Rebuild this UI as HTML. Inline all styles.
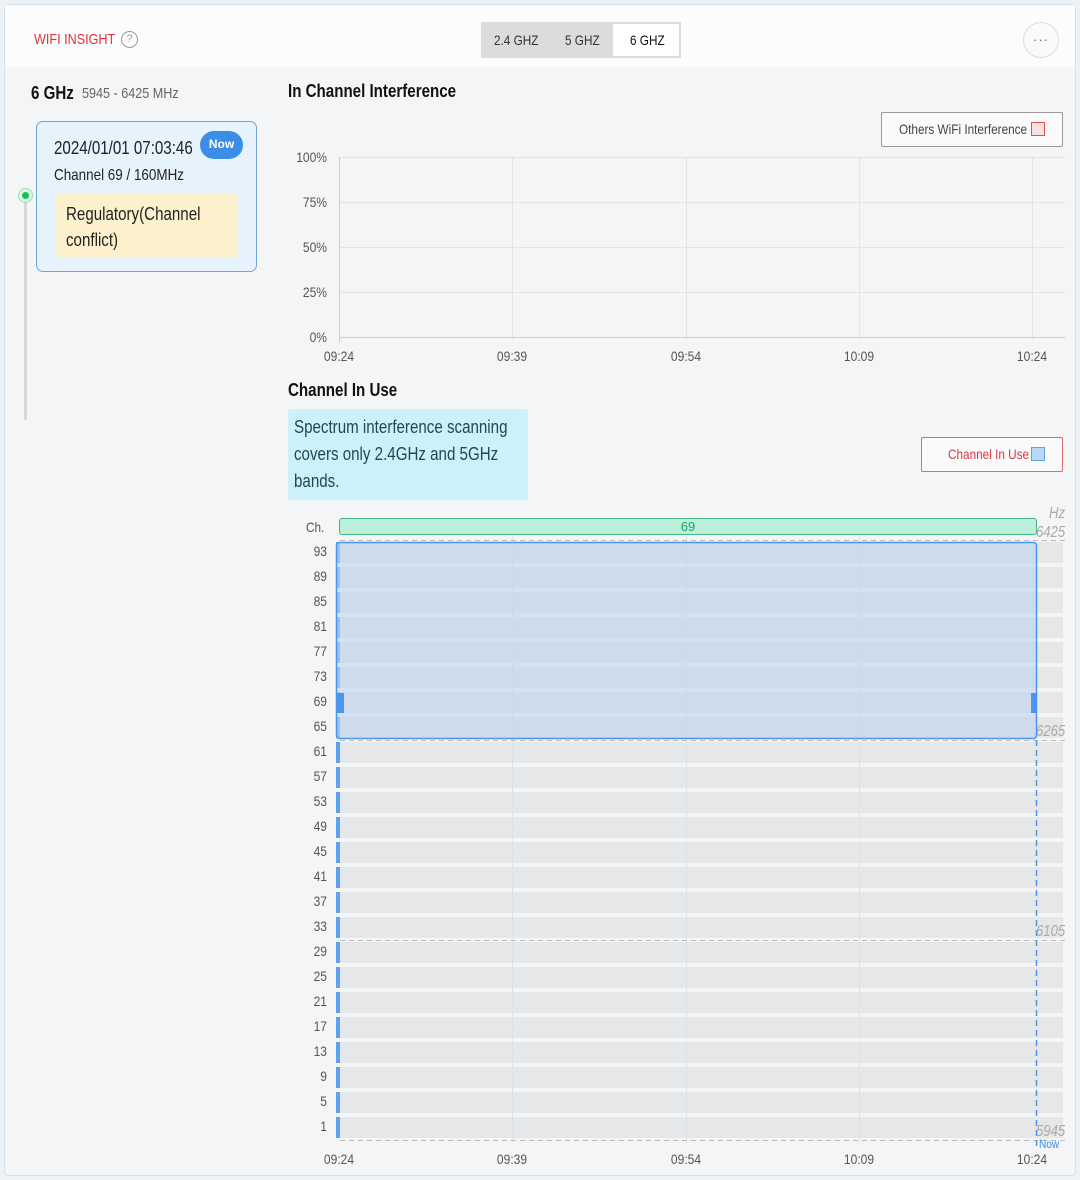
<!DOCTYPE html>
<html><head><meta charset="utf-8">
<style>
*{margin:0;padding:0;box-sizing:border-box}
body{width:1080px;height:1180px;background:#eef2f5;font-family:"Liberation Sans",sans-serif;color:#222;position:relative;overflow:hidden}
.a{position:absolute;white-space:nowrap}
.n{transform:scaleX(.84);transform-origin:0 0}
.card{left:4px;top:4px;width:1072px;height:1172px;background:#f4f5f6;border:1px solid #cfe3f0;border-radius:4px}
.hdr{left:5px;top:5px;width:1070px;height:62px;background:#fbfcfc}
.yl{font-size:14px;color:#555;text-align:right;width:40px;transform:scaleX(.86);transform-origin:100% 0}
.xl{font-size:14px;color:#555;width:50px;text-align:center;transform:scaleX(.86)}
.row{left:340px;width:723px;height:21px;background:#e6e7e8}
.tick{left:336px;width:4px;height:21px;background:#5aa2f2}
.cl{left:296px;width:31px;text-align:right;font-size:14px;color:#555;transform:scaleX(.86);transform-origin:100% 0}
.hz{font-size:16px;color:#aaa;font-style:italic;transform:scaleX(.82);transform-origin:0 0}
</style></head><body>
<div class="a card"></div>
<div class="a hdr"></div>
<div class="a n" style="left:34px;top:31px;font-size:15px;color:#e0303a">WIFI INSIGHT</div>
<div class="a" style="left:121px;top:31px;width:17px;height:17px;border:1.5px solid #999;border-radius:50%;font-size:11px;color:#999;text-align:center;line-height:14px">?</div>
<div class="a" style="left:481px;top:22px;width:200px;height:36px;background:#dcdcdc;border:1px solid #ddd"></div>
<div class="a" style="left:613px;top:24px;width:66px;height:32px;background:#fff"></div>
<div class="a n" style="left:494px;top:32px;font-size:14px;color:#333">2.4 GHZ</div>
<div class="a n" style="left:565px;top:32px;font-size:14px;color:#333">5 GHZ</div>
<div class="a n" style="left:630px;top:32px;font-size:14px;color:#111">6 GHZ</div>
<div class="a" style="left:1023px;top:22px;width:36px;height:36px;border:1px solid #ddd;border-radius:50%;background:#fafafa;text-align:center;line-height:34px;color:#666;font-size:13px;letter-spacing:1px">···</div>

<div class="a n" style="left:31px;top:83px;font-size:18px;font-weight:bold;color:#111">6 GHz</div>
<div class="a n" style="left:82px;top:85px;font-size:15px;color:#666">5945 - 6425 MHz</div>
<div class="a" style="left:24px;top:200px;width:3px;height:220px;background:#d8d8d8"></div>
<div class="a" style="left:18px;top:188px;width:15px;height:15px;border-radius:50%;background:#dff5e6;border:1px solid #9ee0b2"></div>
<div class="a" style="left:22px;top:192px;width:7px;height:7px;border-radius:50%;background:#18c050"></div>
<div class="a" style="left:36px;top:121px;width:221px;height:151px;background:#e6f2fc;border:1.5px solid #6ea5e0;border-radius:7px"></div>
<div class="a n" style="left:54px;top:138px;font-size:18px;color:#222">2024/01/01 07:03:46</div>
<div class="a" style="left:200px;top:131px;width:43px;height:28px;border-radius:14px;background:#3a8ee8;color:#fff;font-size:12px;font-weight:bold;text-align:center;line-height:26px">Now</div>
<div class="a n" style="left:54px;top:167px;font-size:16px;color:#222">Channel 69 / 160MHz</div>
<div class="a" style="left:55px;top:193px;width:183px;height:65px;background:#fdf0cd;border-radius:6px"></div>
<div class="a n" style="left:66px;top:201px;font-size:18px;line-height:26px;color:#222">Regulatory(Channel<br>conflict)</div>

<div class="a n" style="left:288px;top:81px;font-size:18px;font-weight:bold;color:#111">In Channel Interference</div>
<div class="a" style="left:881px;top:112px;width:182px;height:35px;border:1px solid #999;border-radius:2px;background:#fafafa"></div>
<div class="a n" style="left:899px;top:121px;font-size:14px;color:#444">Others WiFi Interference</div>
<div class="a" style="left:1031px;top:122px;width:14px;height:14px;border:1.5px solid #e05050;background:#f6e2e2"></div>

<svg class="a" style="left:0;top:0" width="1080" height="380">
<g stroke="#e4e4e4" stroke-width="1">
<line x1="340" y1="157.5" x2="1065" y2="157.5"/><line x1="340" y1="202.5" x2="1065" y2="202.5"/><line x1="340" y1="247.5" x2="1065" y2="247.5"/><line x1="340" y1="292.5" x2="1065" y2="292.5"/>
<line x1="512.5" y1="157" x2="512.5" y2="340"/><line x1="686.5" y1="157" x2="686.5" y2="340"/><line x1="859.5" y1="157" x2="859.5" y2="340"/><line x1="1032.5" y1="157" x2="1032.5" y2="340"/>
</g>
<line x1="339.5" y1="157" x2="339.5" y2="342" stroke="#ccc"/>
<line x1="339" y1="337.5" x2="1065" y2="337.5" stroke="#ccc"/>
</svg>
<div class="a yl" style="left:287px;top:149px">100%</div>
<div class="a yl" style="left:287px;top:194px">75%</div>
<div class="a yl" style="left:287px;top:239px">50%</div>
<div class="a yl" style="left:287px;top:284px">25%</div>
<div class="a yl" style="left:287px;top:329px">0%</div>
<div class="a xl" style="left:314px;top:348px">09:24</div>
<div class="a xl" style="left:487px;top:348px">09:39</div>
<div class="a xl" style="left:661px;top:348px">09:54</div>
<div class="a xl" style="left:834px;top:348px">10:09</div>
<div class="a xl" style="left:1007px;top:348px">10:24</div>

<div class="a n" style="left:288px;top:380px;font-size:18px;font-weight:bold;color:#111">Channel In Use</div>
<div class="a" style="left:288px;top:409px;width:240px;height:91px;background:#cdf1fa;border-radius:3px"></div>
<div class="a n" style="left:294px;top:414px;font-size:18px;line-height:27px;color:#1d4a50">Spectrum interference scanning<br>covers only 2.4GHz and 5GHz<br>bands.</div>
<div class="a" style="left:921px;top:437px;width:142px;height:35px;border:1px solid #e06a70;border-radius:2px;background:#fafafa"></div>
<div class="a n" style="left:948px;top:446px;font-size:14px;color:#d83a44">Channel In Use</div>
<div class="a" style="left:1031px;top:447px;width:14px;height:14px;border:1.5px solid #5aa2f2;background:#b8d6f5"></div>

<div class="a n" style="left:306px;top:519px;font-size:14px;color:#555">Ch.</div>
<div class="a hz" style="left:1049px;top:505px">Hz</div>

<div class="a row" style="top:542px"></div><div class="a tick" style="top:542px"></div><div class="a cl" style="top:543px">93</div>
<div class="a row" style="top:567px"></div><div class="a tick" style="top:567px"></div><div class="a cl" style="top:568px">89</div>
<div class="a row" style="top:592px"></div><div class="a tick" style="top:592px"></div><div class="a cl" style="top:593px">85</div>
<div class="a row" style="top:617px"></div><div class="a tick" style="top:617px"></div><div class="a cl" style="top:618px">81</div>
<div class="a row" style="top:642px"></div><div class="a tick" style="top:642px"></div><div class="a cl" style="top:643px">77</div>
<div class="a row" style="top:667px"></div><div class="a tick" style="top:667px"></div><div class="a cl" style="top:668px">73</div>
<div class="a row" style="top:692px"></div><div class="a tick" style="top:692px"></div><div class="a cl" style="top:693px">69</div>
<div class="a row" style="top:717px"></div><div class="a tick" style="top:717px"></div><div class="a cl" style="top:718px">65</div>
<div class="a row" style="top:742px"></div><div class="a tick" style="top:742px"></div><div class="a cl" style="top:743px">61</div>
<div class="a row" style="top:767px"></div><div class="a tick" style="top:767px"></div><div class="a cl" style="top:768px">57</div>
<div class="a row" style="top:792px"></div><div class="a tick" style="top:792px"></div><div class="a cl" style="top:793px">53</div>
<div class="a row" style="top:817px"></div><div class="a tick" style="top:817px"></div><div class="a cl" style="top:818px">49</div>
<div class="a row" style="top:842px"></div><div class="a tick" style="top:842px"></div><div class="a cl" style="top:843px">45</div>
<div class="a row" style="top:867px"></div><div class="a tick" style="top:867px"></div><div class="a cl" style="top:868px">41</div>
<div class="a row" style="top:892px"></div><div class="a tick" style="top:892px"></div><div class="a cl" style="top:893px">37</div>
<div class="a row" style="top:917px"></div><div class="a tick" style="top:917px"></div><div class="a cl" style="top:918px">33</div>
<div class="a row" style="top:942px"></div><div class="a tick" style="top:942px"></div><div class="a cl" style="top:943px">29</div>
<div class="a row" style="top:967px"></div><div class="a tick" style="top:967px"></div><div class="a cl" style="top:968px">25</div>
<div class="a row" style="top:992px"></div><div class="a tick" style="top:992px"></div><div class="a cl" style="top:993px">21</div>
<div class="a row" style="top:1017px"></div><div class="a tick" style="top:1017px"></div><div class="a cl" style="top:1018px">17</div>
<div class="a row" style="top:1042px"></div><div class="a tick" style="top:1042px"></div><div class="a cl" style="top:1043px">13</div>
<div class="a row" style="top:1067px"></div><div class="a tick" style="top:1067px"></div><div class="a cl" style="top:1068px">9</div>
<div class="a row" style="top:1092px"></div><div class="a tick" style="top:1092px"></div><div class="a cl" style="top:1093px">5</div>
<div class="a row" style="top:1117px"></div><div class="a tick" style="top:1117px"></div><div class="a cl" style="top:1118px">1</div>

<svg class="a" style="left:0;top:0" width="1080" height="1180">
<g stroke="#dde3ea" stroke-width="1">
<line x1="512.5" y1="536" x2="512.5" y2="1142"/><line x1="686.5" y1="536" x2="686.5" y2="1142"/><line x1="859.5" y1="536" x2="859.5" y2="1142"/>
</g>
<g stroke="#bbb" stroke-dasharray="5,4">
<line x1="340" y1="540.5" x2="1065" y2="540.5"/><line x1="340" y1="740.5" x2="1065" y2="740.5"/><line x1="340" y1="940.5" x2="1065" y2="940.5"/><line x1="340" y1="1140.5" x2="1065" y2="1140.5"/>
</g>
<line x1="1036.5" y1="740" x2="1036.5" y2="1150" stroke="#4a96ec" stroke-width="1.5" stroke-dasharray="6,4"/>
<rect x="336.5" y="542.5" width="700" height="196" rx="3" fill="rgba(190,212,240,0.6)" stroke="#4a96ec" stroke-width="1.5"/>
<rect x="337" y="693" width="7" height="20" fill="#4a96ec"/>
<rect x="1031" y="693" width="5" height="20" fill="#4a96ec"/>
</svg>
<div class="a" style="left:339px;top:518px;width:698px;height:17px;background:#bdeedc;border:1.5px solid #3fb785;border-radius:3px;text-align:center;font-size:13px;color:#1aa86a;line-height:15px">69</div>
<div class="a hz" style="left:1036px;top:524px">6425</div>
<div class="a hz" style="left:1036px;top:723px">6265</div>
<div class="a hz" style="left:1036px;top:923px">6105</div>
<div class="a hz" style="left:1036px;top:1123px">5945</div>
<div class="a n" style="left:1039px;top:1137px;font-size:12px;color:#3a8ee8">Now</div>
<div class="a xl" style="left:314px;top:1151px">09:24</div>
<div class="a xl" style="left:487px;top:1151px">09:39</div>
<div class="a xl" style="left:661px;top:1151px">09:54</div>
<div class="a xl" style="left:834px;top:1151px">10:09</div>
<div class="a xl" style="left:1007px;top:1151px">10:24</div>
</body></html>
